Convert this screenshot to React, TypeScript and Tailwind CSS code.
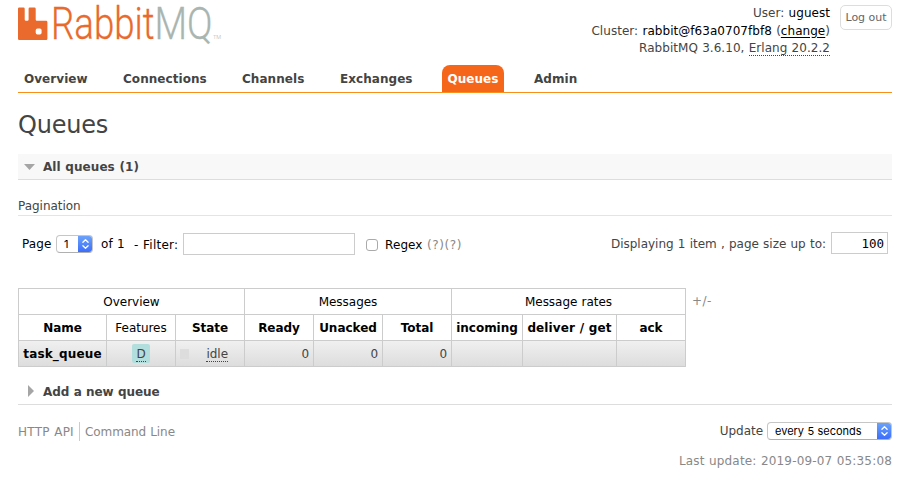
import type { ReactNode } from 'react';

const tabs = [
  { name: 'Overview', cls: 'w-[99px]' },
  { name: 'Connections', cls: 'w-[119px]' },
  { name: 'Channels', cls: 'w-[98px]' },
  { name: 'Exchanges', cls: 'w-[108px]' },
  { name: 'Queues', cls: 'w-[86px]', active: true },
  { name: 'Admin', cls: 'w-[60px]' },
];

function Logo() {
  return (
    <svg className="block h-[52px] w-[206px] overflow-visible" viewBox="18 0 206 52">
      <path
        fill="#e96a2c"
        fillRule="evenodd"
        d="M19.200 7.600h4.300q1.200 0 1.200 1.200v10.800q0 1.200 1.200 1.200h1.500q1.200 0 1.200-1.200V8.800q0-1.200 1.200-1.200h4.700q1.200 0 1.200 1.200v10.800q0 1.200 1.200 1.200h9.300q1.200 0 1.200 1.200v16.800q0 1.200-1.200 1.200h-27q-1.200 0-1.200-1.200v-30q0-1.200 1.200-1.200zM37.400 28.600q-1.700 0-1.700 1.700v2.500q0 1.700 1.700 1.700h2.500q1.700 0 1.700-1.700V30.300q0-1.700-1.700-1.700z"
      />
      <g fontFamily="Roboto, sans-serif" fontWeight="300" fontSize="44" strokeWidth="0.3">
        <text x="51" y="39.300" fill="#e96a2c" stroke="#e96a2c" textLength="103.500" lengthAdjust="spacingAndGlyphs">Rabbit</text>
        <text x="154.500" y="39.300" fill="#a9b5b0" stroke="#a9b5b0" textLength="58" lengthAdjust="spacingAndGlyphs">MQ</text>
        <text x="213" y="39" fill="#a9b5b0" fontSize="6" textLength="8" lengthAdjust="spacingAndGlyphs">TM</text>
      </g>
    </svg>
  );
}

function MacSelect({ children, cls, arrowCls }: { children: ReactNode; cls: string; arrowCls: string }) {
  return (
    <div className={`flex h-[18px] overflow-hidden rounded-[4px] border border-[#c6c6c6] border-b-[#b0b0b0] bg-white font-[Inter,sans-serif] text-[11px] tracking-[-0.020px] text-black ${cls}`}>
      <div className="flex-1 leading-[17px]">{children}</div>
      <div className={`-my-px -mr-px h-[18px] shrink-0 bg-linear-to-b from-[#6fa5fa] to-[#3b69fb] ${arrowCls}`}>
        <svg className="block h-[18px] w-full" viewBox="0 0 15 18" fill="none" stroke="white" strokeWidth="1.3" strokeLinecap="round" strokeLinejoin="round">
          <path d="M4.900 7.300 7.500 4.800l2.600 2.500M4.900 10.700l2.600 2.500 2.600-2.500" />
        </svg>
      </div>
    </div>
  );
}

const cell = 'flex items-center justify-center border-r border-b border-[#ccc]';
const head = `${cell} font-bold`;
const body = `${cell} bg-linear-to-b from-[#f0f0f0] to-[#dddddd] text-[#444]`;

export default function App() {
  return (
    <div className="h-[484px] w-[907px] overflow-hidden bg-white pl-[18px] pr-[15px] font-['DejaVu_Sans',Verdana,sans-serif] text-[12px] tracking-[-0.030px] [word-spacing:0.4px] whitespace-nowrap text-[#444]">
      <header className="flex h-[65px] justify-between">
        <Logo />
        <div className="flex gap-[10px] pt-[5px]">
          <div className="text-right leading-[17.500px] tracking-[0.040px]">
            <div>User: <span className="text-black">uguest</span></div>
            <div>Cluster: <span className="text-black">rabbit@f63a0707fbf8</span> (<span className="text-black underline underline-offset-2">change</span>)</div>
            <div>RabbitMQ 3.6.10, <span className="border-b border-dotted border-[#444]">Erlang 20.2.2</span></div>
          </div>
          <button className="h-[25px] w-[52px] rounded-[5px] border border-[#ddd] pt-[2px] text-[11px] text-[#666]">Log out</button>
        </div>
      </header>
      <nav className="flex h-[28px] border-b border-[#f88f1a] font-bold leading-[29px] tracking-[0.050px]">
        {tabs.map((t) => (
          <div key={t.name} className={t.cls}>
            {t.active ? (
              <span className="block h-[27px] w-[62px] rounded-t-[8px] bg-[#f6661a] text-center text-white">{t.name}</span>
            ) : (
              <span className="block pl-[6px]">{t.name}</span>
            )}
          </div>
        ))}
      </nav>
      <h1 className="mt-[16px] h-[45px] text-[24px] leading-[32px] tracking-[-0.200px]">Queues</h1>
      <h2 className="flex h-[26px] items-center border-b border-[#ddd] bg-[#f8f8f8] font-bold tracking-[0.060px]">
        <svg className="ml-[6px] mr-[8px] h-[6px] w-[11px]" viewBox="0 0 11 6"><path d="M0 0h11L5.500 6z" fill="#a5a5a5" /></svg>
        All queues (1)
      </h2>
      <h3 className="mt-[18px] h-[18px] border-b border-[#e4e4e4] leading-[16px]">Pagination</h3>
      <div className="mt-[16px] flex h-[24px] items-center">
        <span className="ml-[4px] w-[34px] tracking-[0.150px] text-black">Page</span>
        <MacSelect cls="w-[37px] pl-[7px]" arrowCls="w-[15px]">1</MacSelect>
        <span className="ml-[8px] w-[33px] tracking-[0.100px] text-black">of 1</span>
        <span className="w-[49px] pt-[2px] tracking-[0.250px] text-black">- Filter:</span>
        <input className="-mt-px h-[22px] w-[172px] border border-[#ccc]" />
        <span className="mt-[2px] ml-[11px] size-[12px] rounded-[3px] border border-[#aaa]" />
        <span className="ml-[7px] pt-[2px] tracking-[0.100px] text-black">Regex <span className="tracking-[0.600px] text-[#888]">(?)(?)</span></span>
        <span className="ml-auto mr-[5px] tracking-[-0.010px]">Displaying 1 item , page size up to:</span>
        <div className="-mt-[2px] mr-[4px] h-[22px] w-[57px] border border-[#ccc] pr-[3px] text-right font-['DejaVu_Sans_Mono',monospace] text-[12.500px] leading-[22px] text-black">100</div>
      </div>
      <div className="mt-[32px] flex">
        <div className="grid w-[668px] grid-cols-[88px_69px_69px_69px_69px_69px_71px_94px_69px] grid-rows-[26px_26px_26px] border-t border-l border-[#ccc] text-black">
          <div className={`${cell} col-span-3`}>Overview</div>
          <div className={`${cell} col-span-3`}>Messages</div>
          <div className={`${cell} col-span-3`}>Message rates</div>
          <div className={head}>Name</div>
          <div className={cell}>Features</div>
          <div className={head}>State</div>
          <div className={head}>Ready</div>
          <div className={head}>Unacked</div>
          <div className={head}>Total</div>
          <div className={head}>incoming</div>
          <div className={head}><span className="tracking-[0.100px]">deliver / get</span></div>
          <div className={head}>ack</div>
          <div className={`${body} font-bold`}><span className="tracking-[0.150px] text-black">task_queue</span></div>
          <div className={body}>
            <span className="flex h-[19px] w-[18px] items-center justify-center rounded-[2px] bg-[#b2dfdd]">
              <span className="mt-[2px] border-b border-dotted border-[#444] leading-[13px]">D</span>
            </span>
          </div>
          <div className={body}>
            <span className="mr-[17px] ml-[4px] size-[10px] bg-[#ddd]" />
            <span className="mr-[16px] mt-[2px] border-b border-dotted border-[#444] leading-[13px]">idle</span>
          </div>
          {[0, 1, 2].map((i) => (
            <div key={i} className={`${body} justify-end pr-[4px]`}><span>0</span></div>
          ))}
          <div className={body} />
          <div className={body} />
          <div className={body} />
        </div>
        <span className="ml-[6px] mt-[4px] tracking-[0.500px] text-[#888]">+/-</span>
      </div>
      <h2 className="mt-[11px] flex h-[27px] items-center border-b border-[#ddd] font-bold">
        <svg className="ml-[10px] mr-[9px] h-[12px] w-[6px]" viewBox="0 0 6 12"><path d="M0 0v12L6 6z" fill="#a5a5a5" /></svg>
        <span className="pt-[2px] tracking-[-0.100px]">Add a new queue</span>
      </h2>
      <footer className="flex justify-between text-[#888]">
        <div className="mt-[17px] flex h-[19px] leading-[20px]">
          <span className="w-[62px] border-r border-[#ccc] tracking-[0.250px]">HTTP API</span>
          <span className="ml-[5px] tracking-[-0.080px]">Command Line</span>
        </div>
        <div className="pt-[17px]">
          <div className="flex justify-end">
            <span className="mr-[4px] text-[#444]">Update</span>
            <MacSelect cls="w-[125px] pl-[7px]" arrowCls="w-[15px]">every 5 seconds</MacSelect>
          </div>
          <div className="mt-[12px] text-right tracking-[0.170px]">Last update: 2019-09-07 05:35:08</div>
        </div>
      </footer>
    </div>
  );
}
